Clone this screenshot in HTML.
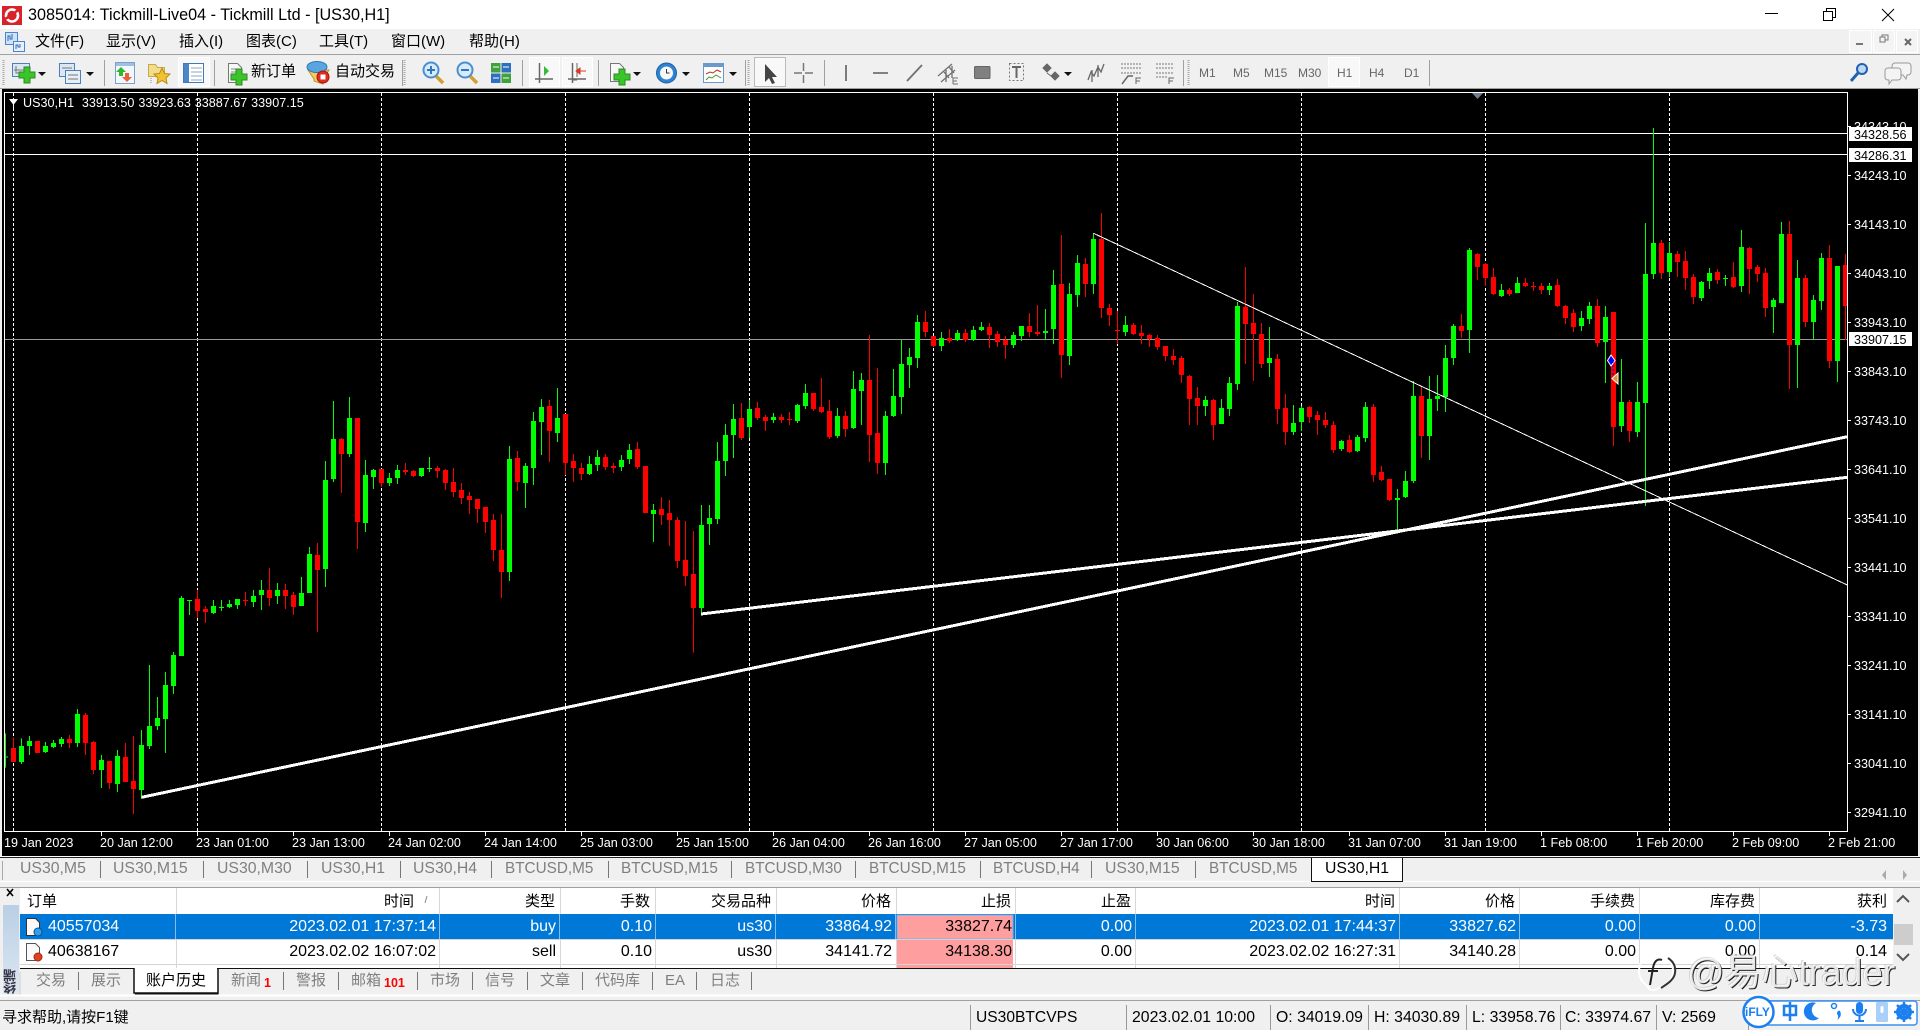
<!DOCTYPE html>
<html><head><meta charset="utf-8"><title>MT4</title>
<style>
html,body{margin:0;padding:0;background:#f0f0f0;width:1920px;height:1030px;overflow:hidden}
body{position:relative;font-family:"Liberation Sans","Noto Sans CJK SC",sans-serif;color:#000}
.t{position:absolute;white-space:nowrap;line-height:20px;font-size:16px}
.b{position:absolute}
.c{font-size:15px}
.a{position:absolute;white-space:nowrap;font-size:12.6px;line-height:14px;color:#fff}
.g{color:#7f7f7f}
.u{font-size:15.3px}
.m{position:absolute;white-space:nowrap;font-size:12px;line-height:14px;color:#666;top:66px}
.w{color:#fff}
</style></head><body>
<div class="b" style="left:0;top:0;width:1920px;height:29px;background:#fff"></div>
<div class="b" style="left:0;top:54px;width:1920px;height:1px;background:#a0a0a0"></div>
<div class="b" style="left:0;top:88px;width:1920px;height:1px;background:#a0a0a0"></div>
<div class="b" style="left:2px;top:89px;width:1916px;height:767px;background:#000"></div>
<div class="b" style="left:0;top:856px;width:1920px;height:1px;background:#fff"></div>
<div class="b" style="left:0;top:857px;width:1920px;height:1px;background:#222"></div>
<div class="b" style="left:0;top:881px;width:1920px;height:1px;background:#fff"></div>
<div class="b" style="left:0;top:887px;width:1920px;height:1px;background:#a0a0a0"></div>

<svg class="b" style="left:0;top:0" width="1920" height="860" viewBox="0 0 1920 860" fill="none">
<defs><clipPath id="cl"><rect x="5" y="93" width="1842" height="738"/></clipPath></defs>
<g clip-path="url(#cl)" shape-rendering="crispEdges">
<path stroke="#fff" stroke-dasharray="3 2" d="M13.5 93V831M197.5 93V831M381.5 93V831M565.5 93V831M749.5 93V831M933.5 93V831M1117.5 93V831M1301.5 93V831M1485.5 93V831M1669.5 93V831"/>
<path stroke="#fff" d="M5 133.5H1847M5 154.5H1847"/>
<path stroke="#9a9a9a" d="M5 339.5H1847"/>
<g transform="translate(0,400) scale(1,.33333)">
<path stroke="#00ff00" d="M5.5 1000V1103M21.5 1015V1092M29.5 1008V1065M45.5 1026V1059M53.5 1020V1044M61.5 1011V1041M77.5 927V1041M101.5 1065V1164M117.5 1050V1176M141.5 990V1197M149.5 795V1047M157.5 891V990M165.5 816V1059M173.5 756V882M181.5 588V768M189.5 600V645M213.5 600V642M221.5 600V633M229.5 600V624M237.5 597V627M253.5 570V621M261.5 540V630M277.5 549V612M301.5 531V618M309.5 441V579M325.5 183V561M333.5 3V246M349.5 -9V171M365.5 180V396M373.5 207V267M389.5 219V258M397.5 195V252M421.5 204V231M429.5 171V216M509.5 138V543M525.5 189V324M533.5 36V255M541.5 -3V165M557.5 -36V126M589.5 168V225M597.5 150V213M621.5 165V213M629.5 132V192"/>
<path stroke="#00ff00" stroke-width="5" d="M5.5 1069V1072M21.5 1038V1086M29.5 1023V1038M45.5 1038V1056M53.5 1029V1041M61.5 1017V1032M77.5 942V1029M101.5 1080V1110M117.5 1068V1152M141.5 1035V1170M149.5 978V1038M157.5 954V978M165.5 855V957M173.5 765V858M181.5 594V768M189.5 600V603M213.5 618V639M221.5 621V624M229.5 612V621M237.5 597V615M253.5 588V606M261.5 570V585M277.5 570V588M301.5 579V618M309.5 462V579M325.5 240V507M333.5 117V237M349.5 54V162M365.5 225V369M373.5 210V231M389.5 234V249M397.5 210V234M421.5 204V228M429.5 204V207M509.5 177V516M525.5 198V249M533.5 63V204M541.5 21V66M557.5 54V99M589.5 192V222M597.5 171V195M621.5 180V201M629.5 150V177"/>
<path stroke="#ff0000" d="M13.5 1012V1086M69.5 1005V1044M85.5 939V1065M93.5 1023V1122M109.5 1083V1167M125.5 1029V1146M133.5 1008V1242M197.5 570V654M205.5 618V669M245.5 576V618M269.5 504V618M285.5 552V627M293.5 576V645M317.5 429V696M341.5 114V279M357.5 54V447M381.5 207V261M405.5 189V225M413.5 210V231M437.5 198V234M445.5 207V270M453.5 204V291M461.5 249V312M469.5 276V342M477.5 297V369M485.5 321V399M493.5 342V483M501.5 342V594M517.5 153V273M549.5 0V186M565.5 42V225M573.5 162V246M581.5 189V240M605.5 162V210M613.5 189V219M637.5 126V207"/>
<path stroke="#ff0000" stroke-width="5" d="M13.5 1044V1086M37.5 1023V1059M69.5 1017V1029M85.5 945V1029M93.5 1026V1110M109.5 1083V1149M125.5 1071V1146M133.5 1143V1167M197.5 597V633M205.5 627V636M245.5 600V603M269.5 570V594M285.5 570V588M293.5 585V621M317.5 465V510M341.5 117V162M357.5 54V366M381.5 207V249M405.5 210V216M413.5 213V228M437.5 204V213M445.5 210V249M453.5 246V276M461.5 270V294M469.5 288V300M477.5 297V327M485.5 321V366M493.5 360V450M501.5 450V516M517.5 174V246M549.5 18V93M565.5 42V189M573.5 183V204M581.5 204V222M605.5 171V201M613.5 198V204M637.5 147V201"/>
</g>
<g transform="translate(0,200) scale(1,.33333)">
<path stroke="#00ff00" d="M653.5 912V1026M701.5 915V1242M709.5 915V1035M717.5 726V972M725.5 672V828M733.5 612V774M749.5 600V714M773.5 639V669M797.5 612V669M805.5 552V627M837.5 624V714M853.5 513V687M861.5 519V675M885.5 633V825M893.5 507V651M901.5 420V642M909.5 444V564M917.5 345V504M941.5 396V453M957.5 390V423M973.5 378V423M981.5 366V393M1013.5 396V444M1021.5 378V423M1045.5 327V420M1053.5 210V432M1069.5 249V495M1077.5 165V321M1093.5 99V282M1125.5 348V408M1205.5 588V648M1221.5 597V672M1229.5 531V648M1237.5 306V570M1269.5 381V531"/>
<path stroke="#00ff00" stroke-width="5" d="M653.5 930V942M701.5 975V1224M709.5 954V972M717.5 783V957M725.5 705V783M733.5 657V705M749.5 627V681M773.5 651V660M797.5 615V663M805.5 579V618M837.5 648V708M853.5 567V684M861.5 540V573M885.5 648V789M893.5 588V648M901.5 492V591M909.5 471V495M917.5 366V474M941.5 414V438M957.5 399V420M973.5 390V420M981.5 381V390M1013.5 405V435M1021.5 378V408M1045.5 393V399M1053.5 255V387M1069.5 282V468M1077.5 189V285M1093.5 117V252M1125.5 375V396M1205.5 600V618M1221.5 624V672M1229.5 549V627M1237.5 318V552M1269.5 474V489"/>
<path stroke="#ff0000" d="M661.5 891V975M669.5 900V1038M677.5 951V1104M685.5 963V1158M693.5 993V1358M741.5 609V720M757.5 606V660M765.5 645V693M781.5 642V669M789.5 636V675M813.5 579V633M821.5 534V639M829.5 600V717M845.5 633V711M869.5 405V786M877.5 504V822M925.5 333V411M933.5 408V441M949.5 387V429M965.5 387V426M989.5 369V444M997.5 393V441M1005.5 408V477M1029.5 339V411M1037.5 315V408M1061.5 105V534M1085.5 174V291M1101.5 39V354M1109.5 312V378M1117.5 333V432M1133.5 369V405M1141.5 375V432M1149.5 402V441M1157.5 405V450M1165.5 438V483M1173.5 447V495M1181.5 468V549M1189.5 525V675M1197.5 561V675M1213.5 597V720M1245.5 201V492M1253.5 282V543M1261.5 369V504M1277.5 462V672"/>
<path stroke="#ff0000" stroke-width="5" d="M645.5 798V939M661.5 927V945M669.5 939V960M677.5 960V1083M685.5 1080V1128M693.5 1122V1224M741.5 654V714M757.5 624V654M765.5 651V663M781.5 651V660M789.5 657V660M813.5 579V627M821.5 621V636M829.5 633V711M845.5 648V687M869.5 540V705M877.5 699V789M925.5 366V396M933.5 408V438M949.5 414V423M965.5 399V420M989.5 381V405M997.5 402V426M1005.5 420V435M1029.5 378V396M1037.5 396V402M1061.5 252V465M1085.5 192V252M1101.5 117V324M1109.5 324V345M1117.5 390V393M1133.5 375V402M1141.5 399V408M1149.5 405V417M1157.5 414V441M1165.5 438V468M1173.5 468V480M1181.5 474V525M1189.5 528V597M1197.5 594V618M1213.5 600V675M1245.5 321V372M1253.5 369V402M1261.5 402V492M1277.5 477V627"/>
<!-- last section -->
<path stroke="#00ff00" d="M1293.5 615V705M1301.5 618V693M1341.5 720V753M1357.5 705V756M1365.5 606V726M1397.5 867V990M1405.5 813V894M1413.5 543V849M1429.5 528V780M1437.5 525V633M1445.5 435V636M1453.5 372V495M1469.5 144V459M1501.5 252V291M1517.5 231V279M1549.5 249V285M1581.5 333V393M1589.5 306V372M1605.5 318V549M1621.5 477V696M1637.5 546V711M1645.5 69V918M1653.5 -216V237M1669.5 126V231M1701.5 243V303M1709.5 204V267M1725.5 225V258M1741.5 90V276M1773.5 294V399M1781.5 66V309M1797.5 180V564M1813.5 285V417M1821.5 159V330M1837.5 198V546"/>
<path stroke="#00ff00" stroke-width="5" d="M1293.5 669V696M1301.5 624V666M1341.5 723V747M1357.5 711V753M1365.5 621V714M1397.5 894V900M1405.5 843V891M1413.5 588V843M1429.5 597V708M1437.5 588V597M1445.5 474V591M1453.5 378V474M1469.5 150V390M1501.5 270V288M1517.5 249V279M1549.5 258V270M1581.5 354V378M1589.5 318V357M1605.5 351V426M1621.5 606V678M1637.5 606V696M1645.5 222V609M1653.5 129V222M1669.5 159V216M1701.5 246V294M1709.5 219V243M1725.5 234V237M1741.5 141V258M1773.5 300V321M1781.5 102V309M1797.5 234V435M1813.5 300V366M1821.5 174V303M1837.5 198V483"/>
<path stroke="#ff0000" d="M1285.5 582V735M1309.5 618V669M1317.5 633V705M1325.5 636V684M1333.5 663V759M1349.5 705V759M1373.5 612V846M1381.5 798V843M1389.5 837V903M1421.5 561V774M1461.5 342V414M1477.5 159V240M1485.5 189V258M1493.5 204V285M1509.5 264V288M1525.5 234V261M1533.5 246V273M1541.5 249V282M1557.5 237V321M1565.5 315V372M1573.5 327V396M1597.5 297V441M1613.5 336V738M1629.5 600V726M1661.5 120V237M1677.5 153V231M1685.5 153V270M1693.5 222V312M1717.5 207V252M1733.5 186V264M1749.5 141V282M1757.5 195V246M1765.5 204V351M1789.5 63V567M1805.5 225V381M1829.5 135V504M1845.5 162V420"/>
<path stroke="#ff0000" stroke-width="5" d="M1285.5 624V696M1309.5 621V651M1317.5 645V660M1325.5 660V675M1333.5 675V750M1349.5 720V756M1373.5 621V825M1381.5 816V840M1389.5 837V900M1421.5 588V708M1461.5 378V393M1477.5 162V201M1485.5 192V234M1493.5 231V282M1509.5 270V282M1525.5 249V258M1533.5 258V261M1541.5 258V270M1557.5 255V318M1565.5 318V354M1573.5 339V381M1597.5 318V429M1613.5 336V681M1629.5 606V693M1661.5 129V219M1677.5 162V186M1685.5 183V234M1693.5 231V291M1717.5 216V240M1733.5 231V261M1749.5 144V207M1757.5 201V222M1765.5 219V324M1789.5 102V435M1805.5 234V366M1829.5 174V483M1845.5 195V318"/>
</g>
<path stroke="#fff" stroke-width="3" d="M141.6 797.3L1847.3 436.7M701 614L1847.3 477.3"/>
<path stroke="#fff" d="M1093.5 233.3L1847.3 585"/>
</g>
<path d="M1611 355l4 5.500-4 5.500-3.500-5.500z" fill="#0000ff" stroke="#fff"/>
<path d="M1613 361V378" stroke="#0000ff" stroke-dasharray="2 2"/>
<path d="M1618 373v11l-6-5.500z" fill="#e09030" stroke="#fff"/>
<rect x="4.500" y="92.500" width="1843" height="739" stroke="#fff"/>
<path stroke="#fff" d="M1848 126.500h3M1848 175.500h3M1848 224.500h3M1848 273.500h3M1848 322.500h3M1848 371.500h3M1848 420.500h3M1848 469.500h3M1848 518.500h3M1848 567.500h3M1848 616.500h3M1848 665.500h3M1848 714.500h3M1848 763.500h3M1848 812.500h3M101.500 832v4M197.500 832v4M293.500 832v4M389.500 832v4M485.500 832v4M581.500 832v4M677.500 832v4M773.500 832v4M869.500 832v4M965.500 832v4M1061.500 832v4M1157.500 832v4M1253.500 832v4M1349.500 832v4M1445.500 832v4M1541.500 832v4M1637.500 832v4M1733.500 832v4M1829.500 832v4"/>
<path d="M1472 93h11l-5.500 6z" fill="#708090"/>
<path d="M9 99h9l-4.500 6z" fill="#fff"/>
<path d="M13.500 104v4" stroke="#fff"/>
</svg>

<!-- title / menu -->
<svg class="b" style="left:0;top:0" width="1920" height="1030" viewBox="0 0 1920 1030" fill="none">
<rect x="2" y="6" width="20" height="19" fill="#d8232a"/>
<circle cx="12" cy="15.500" r="6" stroke="#fff" stroke-width="2.600"/>
<path d="M5 19l7-4 6-5" stroke="#d8232a" stroke-width="2.500"/>
<path d="M1765 13.500h13" stroke="#000"/>
<path d="M1823.500 11.500h9v9h-9zM1826.500 11V8.500h9v9H1833" stroke="#000"/>
<path d="M1882 9l12 12M1894 9l-12 12" stroke="#000"/>
<rect x="1849.500" y="30.500" width="22" height="22" fill="#f4f4f4" stroke="#fff"/>
<rect x="1873.500" y="30.500" width="21" height="22" fill="#f4f4f4" stroke="#fff"/>
<rect x="1896.500" y="30.500" width="21" height="22" fill="#f4f4f4" stroke="#fff"/>
<path d="M1856 44h7" stroke="#777" stroke-width="2"/>
<path d="M1880 42v-5h5v5zM1882 37v-2h6v5h-3" stroke="#777"/>
<path d="M1905 39l6 6M1911 39l-6 6" stroke="#666" stroke-width="2"/>
<rect x="5.500" y="32.500" width="12" height="12" fill="#cfe2f7" stroke="#4a86d0"/>
<rect x="13.500" y="41.500" width="11" height="10" fill="#e8f1fb" stroke="#4a86d0"/>
<path d="M8 41V36h2v3h2v-5M16 49v-4h2v2h2v-3" stroke="#2d6cb5"/>

<!-- toolbar grips + seps -->
<path d="M3.500 60V86M404.500 60V86M748.500 60V86M1188.500 60V86" stroke="#a8a8a8" stroke-width="2" stroke-dasharray="1 1"/>
<path d="M104.500 60V86M214.500 60V86M402.500 60V86M522.500 60V86M598.500 60V86M745.500 60V86M824.500 60V86M1183.500 60V86M1429.500 60V86" stroke="#a0a0a0"/>
<!-- pressed boxes -->
<g fill="#f8f8f8" stroke="#fff"><rect x="178.500" y="57.500" width="31" height="29"/><rect x="529.500" y="57.500" width="30" height="29"/><rect x="562.500" y="57.500" width="30" height="29"/><rect x="1328.500" y="57.500" width="31" height="29"/></g>
<rect x="754.500" y="57.500" width="31" height="29" fill="#f8f8f8" stroke="#bbb"/>

<!-- new chart -->
<rect x="12.500" y="63.500" width="17" height="13" fill="#dce7f5" stroke="#4d7fb8"/>
<path d="M16 66v7h10M14 70h12" stroke="#777"/>
<path d="M24 67h6v5h5v6h-5v5h-6v-5h-5v-6h5z" fill="#3cc52b" stroke="#2a8a20"/>
<path d="M38 72h8l-4 4zM86 72h8l-4 4zM633 72h8l-4 4zM682 72h8l-4 4zM729 72h8l-4 4zM1064 72h8l-4 4z" fill="#111"/>
<!-- profiles -->
<rect x="59.500" y="63.500" width="15" height="13" fill="#dce7f5" stroke="#4d7fb8"/>
<rect x="65.500" y="70.500" width="15" height="13" fill="#e6eef8" stroke="#4d7fb8"/>
<path d="M62 68h10M68 75h10M68 79h10" stroke="#777"/>
<!-- market watch -->
<rect x="115.500" y="62.500" width="19" height="21" fill="#f3f7fc" stroke="#7ba0cc"/>
<rect x="116" y="63" width="18" height="3" fill="#9ec0e4"/>
<path d="M121 67l5 5h-3v4h-4v-4h-3z" fill="#2fb82a"/>
<path d="M127 82l5-5h-3v-4h-4v4h-3z" fill="#e8613a"/>
<!-- navigator -->
<path d="M148.500 64.500h7l2 3h7v9h-16z" fill="#f4dc8c" stroke="#c9a84a"/>
<path d="M162 68l2.500 5.500 5.500.5-4 4 1 5.500-5-3-5 3 1-5.500-4-4 5.500-.5z" fill="#f1c232" stroke="#b98c18"/>
<path d="M151 78v6" stroke="#888" stroke-dasharray="1 1"/>
<!-- terminal -->
<rect x="183.500" y="63.500" width="20" height="19" fill="#fff" stroke="#4378b4"/>
<rect x="184" y="64" width="5" height="18" fill="#4a86c8"/>
<path d="M191 68h11M191 72h11M191 76h11M191 80h11" stroke="#8aa7c8"/>
<!-- new order -->
<path d="M228.500 63.500h9l4 4v15h-13z" fill="#f8f8f8" stroke="#777"/>
<path d="M231 69h6M231 72h7M231 75h5" stroke="#888"/>
<path d="M236 69h6v5h5v6h-5v5h-6v-5h-5v-6h5z" fill="#3cc52b" stroke="#2a8a20"/>
<!-- autotrade -->
<path d="M308 70l21 0-6 9v5l-9-3v-2z" fill="#f3cd55" stroke="#b8962e"/>
<ellipse cx="317" cy="67" rx="10" ry="5.500" fill="#5aa5e0" stroke="#2f78b5"/>
<circle cx="323" cy="77" r="6" fill="#e02d20" stroke="#a01810"/>
<rect x="320.500" y="74.500" width="5" height="5" fill="#fff"/>
<!-- zoom -->
<path d="M436 76l7 7M470 76l7 7" stroke="#d0a030" stroke-width="3.500"/>
<circle cx="431" cy="70" r="7.500" fill="#d8ebfb" stroke="#4b8fd0" stroke-width="2"/>
<circle cx="465" cy="70" r="7.500" fill="#d8ebfb" stroke="#4b8fd0" stroke-width="2"/>
<path d="M427 70h8M431 66v8M461 70h8" stroke="#2f78c0" stroke-width="2"/>
<!-- tiles -->
<rect x="491" y="63" width="9.500" height="9.500" fill="#3fa23a"/><rect x="501.500" y="63" width="9.500" height="9.500" fill="#2f6fc0"/>
<rect x="491" y="73.500" width="9.500" height="9.500" fill="#2f6fc0"/><rect x="501.500" y="73.500" width="9.500" height="9.500" fill="#3fa23a"/>
<path d="M493 67h6M503 67h6M493 78h6M503 78h6" stroke="#fff"/>
<!-- shift / scroll -->
<path d="M539.500 63V83M535 79h18M572.500 63V83M568 79h18" stroke="#666" stroke-width="1.500"/>
<path d="M544 66l5 5-5 5z" fill="#38b838"/>
<path d="M577 63V77M573 80h4" stroke="#666"/>
<path d="M586 71h-6M580 68l-4 3 4 3z" stroke="#d83a20" fill="#d83a20"/>
<!-- indicators -->
<path d="M610.500 63.500h9l4 4v14h-13z" fill="#f8f8f8" stroke="#777"/>
<path d="M619 69h6v5h5v6h-5v5h-6v-5h-5v-6h5z" fill="#3cc52b" stroke="#2a8a20"/>
<!-- clock -->
<circle cx="666.500" cy="73" r="10" fill="#2b83d2" stroke="#1d5fa0"/>
<circle cx="666.500" cy="73" r="6.500" fill="#f8f8f8"/>
<path d="M666.500 69v4h3" stroke="#333"/>
<!-- template -->
<rect x="703.500" y="63.500" width="20" height="19" fill="#fff" stroke="#6a9acb"/>
<rect x="704" y="64" width="19" height="3" fill="#6a9acb"/>
<path d="M706 74l4-2 3 1 4-3 4 2" stroke="#c03020"/>
<path d="M706 80l3-3 3 1 4-3 5 3" stroke="#40a030"/>
<!-- cursor -->
<path d="M765 64v18l4-4 3 6 3-1-3-6 5 0z" fill="#444"/>
<!-- crosshair -->
<path d="M794 73h8M805 73h8M803.500 63v8M803.500 75v8" stroke="#777" stroke-width="1.500"/>
<!-- draw tools -->
<path d="M846 65V81M873 73h15M907 81L922 65" stroke="#707070" stroke-width="1.800"/>
<path d="M938 76l14-12M941 82l14-12M944 72l5 6M949 67l5 6M952 66v12M946 70v12" stroke="#707070" stroke-width="1.300"/>
<path d="M953 84h5M953 84v-6h5M953 81h4" stroke="#707070"/>
<rect x="974.500" y="66.500" width="15.500" height="12" rx="1" fill="#808080" stroke="#666"/>
<rect x="1009.500" y="63.500" width="14" height="17" stroke="#777" stroke-dasharray="2 2"/>
<path d="M1012 67h9M1016.500 67v11" stroke="#666" stroke-width="2"/>
<path d="M1047 64l4 4-4 4-4-4zM1055 72l4 4-4 4-4-4zM1047 73l8 6" fill="#666" stroke="#666"/>
<path d="M1088 80l3-8 3 4 4-9 3 5 3-8M1092 70v12M1098 65v12" stroke="#666" stroke-width="1.300"/>
<path d="M1121 64h20M1121 68h20M1121 73h20" stroke="#777" stroke-dasharray="2 1"/>
<path d="M1122 84l6-8h5" stroke="#666" stroke-width="1.500"/>
<path d="M1136 84v-6h5M1136 81h4" stroke="#666"/>
<path d="M1156 64h18M1156 68h18M1156 73h18M1156 77h12" stroke="#777" stroke-dasharray="2 1"/>
<path d="M1169 84v-6h5M1169 81h4" stroke="#666"/>
<!-- search + chat -->
<circle cx="1862" cy="69" r="5" fill="#bcd8f2" stroke="#2460b0" stroke-width="2"/>
<path d="M1858 73l-7 8" stroke="#2460b0" stroke-width="3"/>
<path d="M1895 63h13a3 3 0 0 1 3 3v6a3 3 0 0 1-3 3h-1l-1 4-3-4h-8a3 3 0 0 1-3-3v-6a3 3 0 0 1 3-3z" fill="#f4f4f4" stroke="#999"/>
<path d="M1888 68h10a3 3 0 0 1 3 3v6a3 3 0 0 1-3 3h-6l-3 4v-4h-1a3 3 0 0 1-3-3v-6a3 3 0 0 1 3-3z" fill="#f4f4f4" stroke="#999"/>

<!-- terminal panel -->
<rect x="20" y="888" width="1873" height="80" fill="#fff"/>
<rect x="20" y="914" width="1873" height="25" fill="#0078d7"/>
<rect x="897" y="915" width="116" height="24" fill="#ff9e9e" stroke="#6cb2ee"/>
<rect x="897" y="940" width="116" height="24" fill="#ff9e9e"/>
<rect x="897" y="965" width="116" height="3" fill="#ff9e9e"/>
<path d="M20 939.500H1893M20 964.500H1893" stroke="#d4d4d4"/>
<path d="M176.500 888V914M439.500 888V914M560.500 888V914M655.500 888V914M776.500 888V914M896.500 888V914M1015.500 888V914M1135.500 888V914M1399.500 888V914M1519.500 888V914M1639.500 888V914M1759.500 888V914M176.500 940V968M439.500 940V968M560.500 940V968M655.500 940V968M776.500 940V968M896.500 940V968M1015.500 940V968M1135.500 940V968M1399.500 940V968M1519.500 940V968M1639.500 940V968M1759.500 940V968" stroke="#d8d8d8"/>
<path d="M175.500 914V939M439.500 914V939M559.500 914V939M655.500 914V939M775.500 914V939M895.500 914V939M1015.500 914V939M1135.500 914V939M1399.500 914V939M1519.500 914V939M1639.500 914V939M1759.500 914V939" stroke="#8abbe8"/>
<path d="M427 896l-2 7" stroke="#888"/>
<path d="M26.500 918.500h9l4 4v13h-13z" fill="#fafafa" stroke="#333"/>
<circle cx="38" cy="932" r="4" fill="#2fa0f0" stroke="#0a4f90"/>
<path d="M26.500 943.500h9l4 4v13h-13z" fill="#fafafa" stroke="#555"/>
<circle cx="38" cy="957" r="4" fill="#e0401c" stroke="#a02a10"/>
<path d="M1897 902l6-6 6 6M1897 954l6 6 6-6" stroke="#555" stroke-width="2"/>
<rect x="1894" y="924" width="19" height="21" fill="#cdcdcd"/>
<path d="M7 889l6 7M13 889l-6 7" stroke="#000" stroke-width="1.600"/>
<defs><linearGradient id="sb" x1="0" y1="0" x2="0" y2="1"><stop offset="0" stop-color="#b9cfe4"/><stop offset="1" stop-color="#dde8f2"/></linearGradient></defs>
<rect x="3" y="905" width="16" height="90" fill="url(#sb)"/>

<!-- bottom tabs -->
<path d="M20 968.500H1895" stroke="#111"/>
<rect x="134" y="968" width="83" height="25" fill="#fff"/>
<path d="M134 968V993H218V968" stroke="#111" stroke-width="1.500"/>
<path d="M218 970V994H135" stroke="#111" stroke-width="1"/>
<path d="M78.500 972V990M283.500 972V990M338.500 972V990M417.500 972V990M472.500 972V990M527.500 972V990M582.500 972V990M652.500 972V990M696.500 972V990M751.500 972V990" stroke="#777"/>
<path d="M20 972V995" stroke="#ccc"/>
<path d="M0 995.500H1920" stroke="#fff" stroke-width="2"/>
<path d="M0 1000.500H1920" stroke="#a0a0a0"/>
<path d="M970.500 1005V1030M1126.500 1005V1030M1270.500 1005V1030M1368.500 1005V1030M1466.500 1005V1030M1560.500 1005V1030M1656.500 1005V1030M1748.500 1005V1030" stroke="#999"/>

<!-- chart tabs -->
<rect x="1311" y="858" width="91" height="23" fill="#fff"/>
<path d="M1311.500 858V881.500H1402.500V858" stroke="#111"/>
<path d="M100.500 861V878M203.500 861V878M307.500 861V878M400.500 861V878M491.500 861V878M608.500 861V878M731.500 861V878M855.500 861V878M980.500 861V878M1091.500 861V878M1195.500 861V878" stroke="#777"/>
<path d="M2.500 861V880" stroke="#aaa"/>
<path d="M1882 875l4-5v10zM1903 870l4 5-4 5z" fill="#aaa"/>

<!-- iFLY -->
<rect x="1752" y="1001" width="165" height="24" rx="3" fill="#fff" stroke="#3a8ff0" stroke-width="1.500"/>
<circle cx="1758.500" cy="1012" r="15" fill="#fff" stroke="#1b7ff0" stroke-width="2.500"/>
<path d="M1784 1006h12v9h-12zM1790 1002v19" stroke="#1b7ff0" stroke-width="2.500"/>
<path d="M1816 1003a9 9 0 1 0 3 15a8 8 0 0 1-3-15z" fill="#1b7ff0"/>
<circle cx="1834" cy="1006" r="2.500" stroke="#1b7ff0" stroke-width="1.500"/>
<path d="M1840 1011c2 4 0 7-3 9c2-3 1-5 0-6c0-3 2-4 3-3z" fill="#1b7ff0"/>
<rect x="1856" y="1002" width="7" height="12" rx="3.500" fill="#1b7ff0"/>
<path d="M1853 1009a6.500 6.500 0 0 0 13 0M1859.500 1016v4M1855 1021h9" stroke="#1b7ff0" stroke-width="2"/>
<rect x="1876" y="1002" width="12" height="20" rx="1.500" fill="#a8d0f8"/>
<rect x="1880.500" y="1006" width="3" height="7" rx="1.500" fill="#fff"/>
<circle cx="1904" cy="1012" r="6" stroke="#1b7ff0" stroke-width="4"/>
<path d="M1904 1002v20M1894 1012h20M1897 1005l14 14M1911 1005l-14 14" stroke="#1b7ff0" stroke-width="2.500"/>

<!-- watermark logo -->
<g stroke-width="2" fill="none">
<path d="M1650 990c0-4-10-6-10-18c0-11 8-16 18-16c10 0 16 8 16 16c0 10-8 14-14 17c-3 2-6 3-10 1z" stroke="#fff" transform="translate(-1,-1)"/>
<path d="M1668 958c6 4 8 9 7 15c-1 7-8 11-14 15" stroke="#333"/>
<path d="M1662 960c-5-2-8 2-9 8l-3 17" stroke="#222"/>
<path d="M1648 971h10" stroke="#222"/>
</g>
</svg>

<!-- title + menus -->
<span class="t" style="left:28px;top:5px;font-size:16.2px">3085014: Tickmill-Live04 - Tickmill Ltd - [US30,H1]</span>
<span class="t c" style="left:35px;top:32px">文件(F)</span>
<span class="t c" style="left:106px;top:32px">显示(V)</span>
<span class="t c" style="left:179px;top:32px">插入(I)</span>
<span class="t c" style="left:246px;top:32px">图表(C)</span>
<span class="t c" style="left:319px;top:32px">工具(T)</span>
<span class="t c" style="left:391px;top:32px">窗口(W)</span>
<span class="t c" style="left:469px;top:32px">帮助(H)</span>
<span class="t c" style="left:251px;top:62px">新订单</span>
<span class="t c" style="left:335px;top:62px">自动交易</span>
<span class="m" style="left:1199px">M1</span><span class="m" style="left:1233px">M5</span><span class="m" style="left:1264px">M15</span><span class="m" style="left:1298px">M30</span><span class="m" style="left:1337px">H1</span><span class="m" style="left:1369px">H4</span><span class="m" style="left:1404px">D1</span>

<!-- chart labels -->
<span class="a" style="left:23px;top:96px;word-spacing:0.4px">US30,H1&nbsp;&nbsp;33913.50 33923.63 33887.67 33907.15</span>
<span class="a" style="left:1854px;top:120px">34343.10</span>
<span class="a" style="left:1854px;top:169px">34243.10</span>
<span class="a" style="left:1854px;top:218px">34143.10</span>
<span class="a" style="left:1854px;top:267px">34043.10</span>
<span class="a" style="left:1854px;top:316px">33943.10</span>
<span class="a" style="left:1854px;top:365px">33843.10</span>
<span class="a" style="left:1854px;top:414px">33743.10</span>
<span class="a" style="left:1854px;top:463px">33641.10</span>
<span class="a" style="left:1854px;top:512px">33541.10</span>
<span class="a" style="left:1854px;top:561px">33441.10</span>
<span class="a" style="left:1854px;top:610px">33341.10</span>
<span class="a" style="left:1854px;top:659px">33241.10</span>
<span class="a" style="left:1854px;top:708px">33141.10</span>
<span class="a" style="left:1854px;top:757px">33041.10</span>
<span class="a" style="left:1854px;top:806px">32941.10</span>
<span class="a" style="left:1849px;top:127px;width:58px;height:14px;background:#fff;color:#000;padding-left:5px;line-height:16px">34328.56</span>
<span class="a" style="left:1849px;top:148px;width:58px;height:14px;background:#fff;color:#000;padding-left:5px;line-height:16px">34286.31</span>
<span class="a" style="left:1849px;top:332px;width:58px;height:14px;background:#fff;color:#000;padding-left:5px;line-height:16px">33907.15</span>
<span class="a" style="left:4px;top:836px">19 Jan 2023</span>
<span class="a" style="left:100px;top:836px">20 Jan 12:00</span>
<span class="a" style="left:196px;top:836px">23 Jan 01:00</span>
<span class="a" style="left:292px;top:836px">23 Jan 13:00</span>
<span class="a" style="left:388px;top:836px">24 Jan 02:00</span>
<span class="a" style="left:484px;top:836px">24 Jan 14:00</span>
<span class="a" style="left:580px;top:836px">25 Jan 03:00</span>
<span class="a" style="left:676px;top:836px">25 Jan 15:00</span>
<span class="a" style="left:772px;top:836px">26 Jan 04:00</span>
<span class="a" style="left:868px;top:836px">26 Jan 16:00</span>
<span class="a" style="left:964px;top:836px">27 Jan 05:00</span>
<span class="a" style="left:1060px;top:836px">27 Jan 17:00</span>
<span class="a" style="left:1156px;top:836px">30 Jan 06:00</span>
<span class="a" style="left:1252px;top:836px">30 Jan 18:00</span>
<span class="a" style="left:1348px;top:836px">31 Jan 07:00</span>
<span class="a" style="left:1444px;top:836px">31 Jan 19:00</span>
<span class="a" style="left:1540px;top:836px">1 Feb 08:00</span>
<span class="a" style="left:1636px;top:836px">1 Feb 20:00</span>
<span class="a" style="left:1732px;top:836px">2 Feb 09:00</span>
<span class="a" style="left:1828px;top:836px">2 Feb 21:00</span>

<!-- chart tabs -->
<span class="t g" style="left:20px;top:859px;font-size:15.8px">US30,M5</span>
<span class="t g" style="left:113px;top:859px;font-size:15.8px">US30,M15</span>
<span class="t g" style="left:217px;top:859px;font-size:15.8px">US30,M30</span>
<span class="t g" style="left:321px;top:859px;font-size:15.8px">US30,H1</span>
<span class="t g" style="left:413px;top:859px;font-size:15.8px">US30,H4</span>
<span class="t g u" style="left:505px;top:859px">BTCUSD,M5</span>
<span class="t g u" style="left:621px;top:859px">BTCUSD,M15</span>
<span class="t g u" style="left:745px;top:859px">BTCUSD,M30</span>
<span class="t g u" style="left:869px;top:859px">BTCUSD,M15</span>
<span class="t g u" style="left:993px;top:859px">BTCUSD,H4</span>
<span class="t g" style="left:1105px;top:859px;font-size:15.8px">US30,M15</span>
<span class="t g u" style="left:1209px;top:859px">BTCUSD,M5</span>
<span class="t" style="left:1325px;top:859px;font-size:15.8px">US30,H1</span>

<!-- table header -->
<span class="t c" style="left:27px;top:892px">订单</span>
<span class="t c" style="right:1506px;top:892px">时间</span>
<span class="t c" style="right:1365px;top:892px">类型</span>
<span class="t c" style="right:1270px;top:892px">手数</span>
<span class="t c" style="right:1149px;top:892px">交易品种</span>
<span class="t c" style="right:1029px;top:892px">价格</span>
<span class="t c" style="right:909px;top:892px">止损</span>
<span class="t c" style="right:789px;top:892px">止盈</span>
<span class="t c" style="right:525px;top:892px">时间</span>
<span class="t c" style="right:405px;top:892px">价格</span>
<span class="t c" style="right:285px;top:892px">手续费</span>
<span class="t c" style="right:165px;top:892px">库存费</span>
<span class="t c" style="right:33px;top:892px">获利</span>
<!-- row 1 -->
<span class="t w" style="left:48px;top:917px">40557034</span>
<span class="t w" style="right:1484px;top:917px">2023.02.01 17:37:14</span>
<span class="t w" style="right:1364px;top:917px">buy</span>
<span class="t w" style="right:1268px;top:917px">0.10</span>
<span class="t w" style="right:1148px;top:917px">us30</span>
<span class="t w" style="right:1028px;top:917px">33864.92</span>
<span class="t" style="right:908px;top:917px">33827.74</span>
<span class="t w" style="right:788px;top:917px">0.00</span>
<span class="t w" style="right:524px;top:917px">2023.02.01 17:44:37</span>
<span class="t w" style="right:404px;top:917px">33827.62</span>
<span class="t w" style="right:284px;top:917px">0.00</span>
<span class="t w" style="right:164px;top:917px">0.00</span>
<span class="t w" style="right:33px;top:917px">-3.73</span>
<!-- row 2 -->
<span class="t" style="left:48px;top:942px">40638167</span>
<span class="t" style="right:1484px;top:942px">2023.02.02 16:07:02</span>
<span class="t" style="right:1364px;top:942px">sell</span>
<span class="t" style="right:1268px;top:942px">0.10</span>
<span class="t" style="right:1148px;top:942px">us30</span>
<span class="t" style="right:1028px;top:942px">34141.72</span>
<span class="t" style="right:908px;top:942px">34138.30</span>
<span class="t" style="right:788px;top:942px">0.00</span>
<span class="t" style="right:524px;top:942px">2023.02.02 16:27:31</span>
<span class="t" style="right:404px;top:942px">34140.28</span>
<span class="t" style="right:284px;top:942px">0.00</span>
<span class="t" style="right:164px;top:942px">0.00</span>
<span class="t" style="right:33px;top:942px">0.14</span>

<span class="t" style="left:3px;top:968px;font-size:13px;font-weight:bold;color:#334;width:16px;height:26px;line-height:16px;writing-mode:vertical-lr;transform:rotate(180deg);letter-spacing:-1px">终端</span>

<!-- bottom tabs -->
<span class="t c g" style="left:36px;top:971px">交易</span>
<span class="t c g" style="left:91px;top:971px">展示</span>
<span class="t c" style="left:146px;top:971px">账户历史</span>
<span class="t c g" style="left:231px;top:971px">新闻</span>
<span class="t" style="left:264px;top:973px;font-size:12.500px;font-weight:bold;color:#f00">1</span>
<span class="t c g" style="left:296px;top:971px">警报</span>
<span class="t c g" style="left:351px;top:971px">邮箱</span>
<span class="t" style="left:384px;top:973px;font-size:12.500px;font-weight:bold;color:#f00">101</span>
<span class="t c g" style="left:430px;top:971px">市场</span>
<span class="t c g" style="left:485px;top:971px">信号</span>
<span class="t c g" style="left:540px;top:971px">文章</span>
<span class="t c g" style="left:595px;top:971px">代码库</span>
<span class="t c g" style="left:665px;top:971px">EA</span>
<span class="t c g" style="left:710px;top:971px">日志</span>

<!-- status -->
<span class="t c" style="left:2px;top:1008px">寻求帮助,请按F1键</span>
<span class="t" style="left:976px;top:1008px;font-size:15.600px">US30BTCVPS</span>
<span class="t" style="left:1132px;top:1008px;font-size:15.800px">2023.02.01 10:00</span>
<span class="t" style="left:1276px;top:1008px;font-size:15.800px">O: 34019.09</span>
<span class="t" style="left:1374px;top:1008px;font-size:15.800px">H: 34030.89</span>
<span class="t" style="left:1472px;top:1008px;font-size:15.800px">L: 33958.76</span>
<span class="t" style="left:1565px;top:1008px;font-size:15.800px">C: 33974.67</span>
<span class="t" style="left:1662px;top:1008px;font-size:15.800px">V: 2569</span>
<span class="t" style="left:1745px;top:1002px;font-size:12px;font-weight:bold;color:#1b7ff0">iFLY</span>

<!-- watermark -->
<span class="t" style="left:1687px;top:950px;font-size:37px;line-height:46px;color:rgba(255,255,255,.88);text-shadow:1px 1px 0 #222,-1px -1px 0 rgba(200,200,200,.7)">@易心trader</span>
</body></html>
